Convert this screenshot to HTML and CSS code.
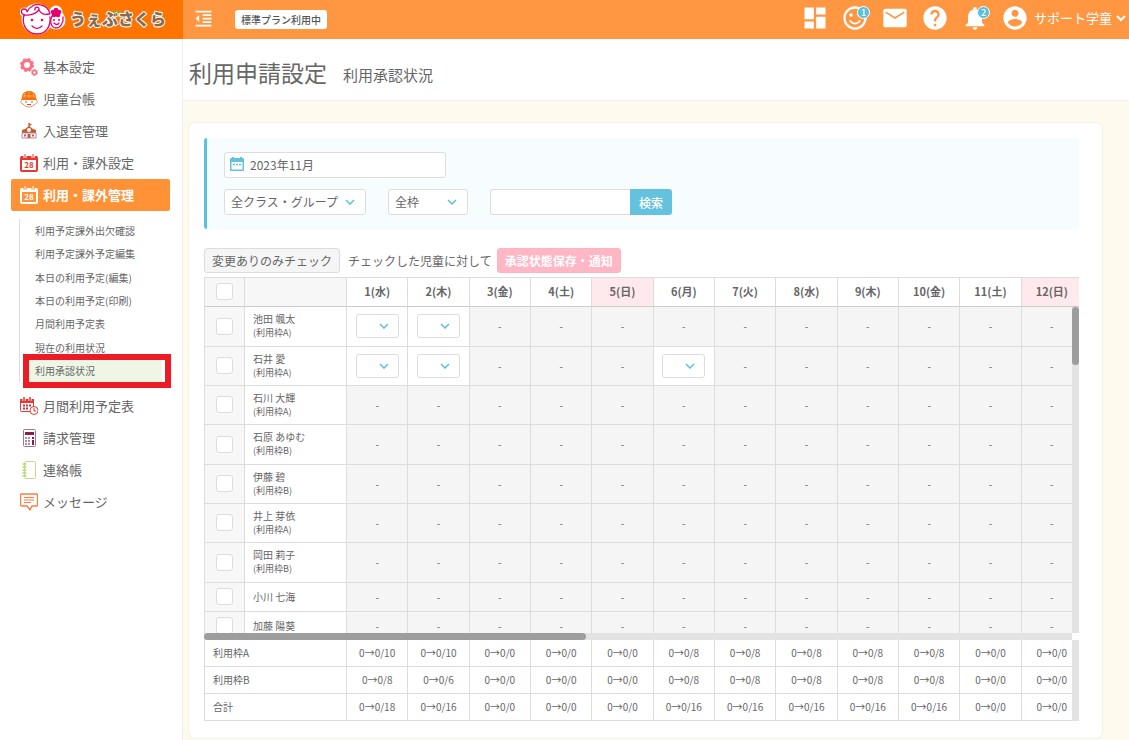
FILE: index.html
```html
<!DOCTYPE html>
<html lang="ja">
<head>
<meta charset="utf-8">
<title>利用承認状況</title>
<link rel="stylesheet" href="styles.css">
</head>
<body>
<header class="topbar">
  <a class="brand" href="#" aria-label="うぇぶさくら">
    <svg class="brand-logo" viewBox="0 0 148 36">
      <g fill="#fff" stroke="#fff" stroke-width="3">
        <circle cx="17" cy="18" r="14"/><circle cx="36" cy="19" r="8"/><circle cx="4" cy="11" r="3"/><circle cx="36" cy="11" r="5"/>
      </g>
      <g fill="none" stroke="#e4006d" stroke-width="1.3" stroke-linecap="round">
        <path d="M4 14C1 13 0 8 4 8c2 0 3 1 3 3C10 5 16 2 21 4c5 1 8 4 9 9"/>
        <path d="M4 14c-3 11 4 19 13 19s14-8 13-17"/>
        <path d="M4 14c6 1 14-2 15-6c0-3-5-2-4 1M19 9c2 4 6 5 10 4"/>
        <path d="M12 25c3 3 7 3 10 0"/>
        <path d="M32 15c-3 7 0 12 4 12s8-5 7-11"/>
        <path d="M34 22c2 2 4 2 5 0"/>
      </g>
      <g fill="#e4006d">
        <circle cx="12" cy="19" r="1.3"/><circle cx="22" cy="19" r="1.3"/><circle cx="34" cy="19" r="1"/><circle cx="39" cy="19" r="1"/>
        <circle cx="36" cy="9" r="2.3"/><circle cx="33" cy="11" r="2.3"/><circle cx="39" cy="11" r="2.3"/><circle cx="34" cy="14" r="2.3"/><circle cx="38" cy="14" r="2.3"/><circle cx="36" cy="12" r="2"/>
      </g>
      <text class="brand-text" x="50" y="24">うぇぶさくら</text>
      <path d="M94 10l1.500 3M97 9l1.500 3" stroke="#6cc04a" stroke-width="1.500"/>
    </svg>
  </a>
  <button class="icon-btn menu-toggle" aria-label="メニュー"><svg viewBox="0 0 24 24"><path d="M11 17h10v-2H11v2zm-8-5l4 4V8l-4 4zm0 9h18v-2H3v2zM3 3v2h18V3H3zm8 6h10V7H11v2zm0 4h10v-2H11v2z"/></svg></button>
  <span class="plan">標準プラン利用中</span>
  <nav class="tools">
    <button class="icon-btn" aria-label="ダッシュボード"><svg viewBox="0 0 24 24"><path d="M3 13h8V3H3v10zm0 8h8v-6H3v6zm10 0h8V11h-8v10zm0-18v6h8V3h-8z"/></svg></button>
    <button class="icon-btn" aria-label="出席"><svg viewBox="0 0 24 24"><path d="M11.990 2C6.470 2 2 6.480 2 12s4.470 10 9.990 10C17.520 22 22 17.520 22 12S17.520 2 11.990 2zM12 20c-4.420 0-8-3.580-8-8s3.580-8 8-8 8 3.580 8 8-3.580 8-8 8z"/><circle cx="15.500" cy="9.500" r="1.500"/><circle cx="8.500" cy="9.500" r="1.500"/><path d="M12 16c-1.480 0-2.750-.81-3.450-2H6.880c.8 2.050 2.790 3.500 5.120 3.500s4.320-1.450 5.120-3.500h-1.670c-.7 1.190-1.970 2-3.450 2z"/></svg><span class="count">1</span></button>
    <button class="icon-btn" aria-label="メール"><svg viewBox="0 0 24 24"><rect x="2" y="4" width="20" height="16" rx="1.500"/><path d="M4 7l8 5 8-5" fill="none" stroke="#ff9742" stroke-width="1.400"/></svg></button>
    <button class="icon-btn" aria-label="ヘルプ"><svg viewBox="0 0 24 24"><path d="M12 2C6.480 2 2 6.480 2 12s4.480 10 10 10 10-4.480 10-10S17.520 2 12 2zm1 17h-2v-2h2v2zm2.070-7.750l-.9.920C13.450 12.900 13 13.500 13 15h-2v-.5c0-1.100.45-2.100 1.170-2.830l1.240-1.260c.37-.36.590-.86.590-1.410 0-1.100-.9-2-2-2s-2 .9-2 2H8c0-2.210 1.790-4 4-4s4 1.790 4 4c0 .88-.36 1.680-.93 2.250z"/></svg></button>
    <button class="icon-btn" aria-label="お知らせ"><svg viewBox="0 0 24 24"><path d="M12 22c1.100 0 2-.9 2-2h-4c0 1.100.89 2 2 2zm6-6v-5c0-3.070-1.640-5.640-4.500-6.320V4c0-.83-.67-1.500-1.500-1.500s-1.500.67-1.500 1.500v.68C7.630 5.360 6 7.920 6 11v5l-2 2v1h16v-1l-2-2z"/></svg><span class="count">2</span></button>
    <button class="account"><svg viewBox="0 0 24 24"><path d="M12 2C6.480 2 2 6.480 2 12s4.480 10 10 10 10-4.480 10-10S17.520 2 12 2zm0 3c1.660 0 3 1.340 3 3s-1.340 3-3 3-3-1.340-3-3 1.340-3 3-3zm0 14.200c-2.500 0-4.710-1.280-6-3.220.03-1.990 4-3.080 6-3.080 1.990 0 5.970 1.090 6 3.080-1.290 1.940-3.500 3.220-6 3.220z"/></svg><span>サポート学童</span><svg class="caret" viewBox="0 0 10 10"><path d="M1 3l4 4 4-4"/></svg></button>
  </nav>
</header>
<div class="shell">
  <aside class="sidebar">
    <ul class="menu">
      <li><a href="#"><svg viewBox="0 0 18 18"><circle cx="7" cy="7" r="4.500" fill="none" stroke="#ff7085" stroke-width="3"/><circle cx="7" cy="7" r="6" fill="none" stroke="#ff7085" stroke-width="2" stroke-dasharray="2.700 2"/><circle cx="14.500" cy="14.500" r="2" fill="none" stroke="#ff7085" stroke-width="1.500"/><circle cx="14.500" cy="14.500" r="3" fill="none" stroke="#ff7085" stroke-dasharray="1.300 1"/></svg><span>基本設定</span></a></li>
      <li><a href="#"><svg viewBox="0 0 18 18"><path d="M2 8C2 3 5 1 9 1s7 2 7 7l1 2H1z" fill="#f96f08"/><path d="M9 1v7M5 3L4 8M13 3l1 5M3 6h12" stroke="#ffb06b" stroke-width=".8" fill="none"/><path d="M2 10c-3 2 0 4 1 4 3 4 9 4 12 0 1 0 4-2 1-4" fill="#fff" stroke="#f0935a"/><path d="M5 12h2M11 12h2M7 14.500h4" stroke="#d9482b"/></svg><span>児童台帳</span></a></li>
      <li><a href="#"><svg viewBox="0 0 18 18"><path d="M9 1v4" stroke="#7c3a36"/><path d="M9 1l3 1.500L9 4z" fill="#e8501f"/><path d="M5 7l4-3 4 3 3 1v3H2V8z" fill="#c75a28"/><path d="M2 11h14v5H2z" fill="#fff" stroke="#b9878b"/><circle cx="9" cy="8" r="2" fill="#fff"/><path d="M7.500 16v-4h3v4zM4 12.500h2v2H4zM12 12.500h2v2h-2z" fill="#bd5963"/></svg><span>入退室管理</span></a></li>
      <li><a href="#"><svg viewBox="0 0 18 18"><rect x="1" y="3" width="16" height="14" rx="1" fill="#fff" stroke="#e8392e" stroke-width="2"/><path d="M1 2h16v4H1z" fill="#e8392e"/><path d="M5 0v4M13 0v4" stroke="#fff" stroke-width="3"/><path d="M5 0v4M13 0v4" stroke="#e8392e"/><text x="9" y="14" class="cal-num" fill="#e8392e">28</text></svg><span>利用・課外設定</span></a></li>
      <li class="is-open"><a href="#"><svg viewBox="0 0 18 18"><rect x="1" y="3" width="16" height="14" rx="1" fill="none" stroke="#fff" stroke-width="2"/><path d="M1 2h16v4H1z" fill="#fff"/><path d="M5 0v4M13 0v4" stroke="#ff9137" stroke-width="3"/><path d="M5 0v4M13 0v4" stroke="#fff"/><text x="9" y="14" class="cal-num" fill="#fff">28</text></svg><span>利用・課外管理</span></a>
        <ul class="submenu">
          <li><a href="#">利用予定課外出欠確認</a></li>
          <li><a href="#">利用予定課外予定編集</a></li>
          <li><a href="#">本日の利用予定(編集)</a></li>
          <li><a href="#">本日の利用予定(印刷)</a></li>
          <li><a href="#">月間利用予定表</a></li>
          <li><a href="#">現在の利用状況</a></li>
          <li class="is-current"><a href="#">利用承認状況</a></li>
        </ul>
      </li>
      <li><a href="#"><svg viewBox="0 0 18 18"><rect x=".5" y="2.500" width="13" height="12" rx="1" fill="#fff" stroke="#e8392e"/><path d="M0 2h14v4H0z" fill="#e8392e"/><path d="M4 0v4M10 0v4" stroke="#fff" stroke-width="3"/><path d="M4 0v4M10 0v4" stroke="#e8392e" stroke-width="1.500"/><path d="M3 8.500h9M3 11.500h6" stroke="#c8304a" stroke-width="2" stroke-dasharray="2 1"/><circle cx="14" cy="13.500" r="4" fill="#fff" stroke="#e8392e"/><path d="M14 11v3h2" fill="none" stroke="#e8392e"/></svg><span>月間利用予定表</span></a></li>
      <li><a href="#"><svg viewBox="0 0 18 18"><rect x="3.500" y=".5" width="12" height="17" rx="1" fill="#fff" stroke="#a0788c"/><path d="M5 3h9v3H5z" fill="#8c1f49"/><path d="M5 9h6M5 12h6M5 15h6" stroke="#a86080" stroke-width="1.600" stroke-dasharray="2 1"/><path d="M12 8h2v2h-2zM12 11h2v5h-2z" fill="#8c1f49"/></svg><span>請求管理</span></a></li>
      <li><a href="#"><svg viewBox="0 0 18 18"><rect x="4.500" y=".5" width="11" height="17" rx="1" fill="#fff" stroke="#c5d88a"/><path d="M2.500 3h4M2.500 6h4M2.500 9h4M2.500 12h4M2.500 15h4" stroke="#b9d977" stroke-width="1.400"/></svg><span>連絡帳</span></a></li>
      <li><a href="#"><svg viewBox="0 0 18 18"><path d="M2 1h14q1.500 0 1.500 1v10q0 1-1.500 1h-4l-2 4-3-4H2q-1.500 0-1.500-1V2q0-1 1.500-1z" fill="#fff" stroke="#ff7a3c" stroke-width="1.300"/><path d="M4 4.500h10M4 7h10M4 9.500h7" stroke="#ff7a3c"/></svg><span>メッセージ</span></a></li>
    </ul>
  </aside>
  <main class="main">
    <div class="page-head"><h1>利用申請設定</h1><h2>利用承認状況</h2></div>
    <section class="card">
      <form class="filters">
        <label class="date-field">
          <svg viewBox="0 0 14 14"><path d="M1 1h12q1 0 1 1v11q0 1-1 1H1q-1 0-1-1V2q0-1 1-1z" fill="#64c2de"/><path d="M1.500 5h11v7.500h-11z" fill="#fff"/><path d="M3 0v2M11 0v2" stroke="#64c2de" stroke-width="2"/><path d="M3 7.500h2M6 7.500h2M9 7.500h2" stroke="#64c2de" stroke-width="1.500"/></svg>
          <input class="field" type="text" value="2023年11月" aria-label="対象年月">
        </label>
        <div class="filter-row">
          <select class="field class-select" aria-label="クラス・グループ"><option>全クラス・グループ</option></select>
          <select class="field frame-select" aria-label="枠"><option>全枠</option></select>
          <div class="search"><input class="field" type="text" aria-label="児童名"><button type="button">検索</button></div>
        </div>
      </form>
      <div class="actions">
        <button class="btn btn-plain">変更ありのみチェック</button>
        <span>チェックした児童に対して</span>
        <button class="btn btn-pink">承認状態保存・通知</button>
      </div>
      <div class="grid">
        <div class="clip head"><table class="sheet"><thead id="days"></thead></table></div>
        <div class="clip body"><table class="sheet"><tbody id="children"></tbody></table></div>
        <div class="track track-y"><div class="thumb"></div></div>
        <div class="track track-x"><div class="thumb"></div></div>
        <div class="clip foot"><table class="sheet"><tbody id="totals"></tbody></table></div>
        <div class="track track-foot"></div>
      </div>
    </section>
  </main>
</div>
<script src="app.js"></script>
</body>
</html>
```
FILE: styles.css
```css
* { box-sizing: border-box; }
body {
  margin: 0;
  min-height: 100vh;
  display: flex;
  flex-direction: column;
  font-family: "Noto Sans CJK JP", "Noto Sans", sans-serif;
  font-size: 12px;
  color: #666;
  background: #fffaee;
}
button, input, select { font: inherit; color: inherit; margin: 0; }
button { border: 0; padding: 0; background: none; }
a { color: inherit; text-decoration: none; }
ul { list-style: none; margin: 0; padding: 0; }

.topbar { display: flex; align-items: center; height: 39px; background: #ff9742; color: #fff; }
.brand { width: 183px; height: 39px; padding: 1px 0 0 20px; background: #ff7300; }
.brand-logo { display: block; width: 148px; height: 36px; }
.brand-text { font-size: 16px; font-weight: 900; fill: #8a6a4f; stroke: #fff; stroke-width: 2px; stroke-linejoin: round; paint-order: stroke; }
.icon-btn { position: relative; width: 28px; height: 28px; }
.icon-btn svg, .account svg { display: block; width: 28px; height: 28px; fill: #fff; }
.menu-toggle { width: 21px; height: 21px; margin: 0 0 2px 10px; }
.menu-toggle svg { width: 21px; height: 21px; }
.plan { margin-left: 21px; padding: 0 6px; height: 19px; line-height: 19px; border-radius: 3px; background: #fff; color: #555; font-size: 10px; font-weight: 500; }
.tools { display: flex; align-items: center; gap: 12px; margin-left: auto; padding: 0 3px 3px 0; }
.count { position: absolute; top: 2px; left: 16px; width: 13px; height: 13px; border: 1px solid #fff; border-radius: 50%; background: #5bc0de; color: #fff; font-size: 9px; font-weight: 500; line-height: 11px; text-align: center; }
.account { display: flex; align-items: center; gap: 5px; font-size: 13px; line-height: 28px; }
.account .caret { width: 10px; height: 10px; margin-left: -1px; fill: none; stroke: #fff; stroke-width: 2; }

.shell { display: flex; flex: 1; }
.sidebar { width: 183px; flex: none; padding: 12px 12px 0 11px; background: #fff; border-right: 1px solid #eee; }
.menu > li > a { display: flex; align-items: center; gap: 5px; height: 32px; padding-left: 9px; font-size: 13px; border-radius: 2px; }
.menu > li > a svg { width: 18px; height: 18px; flex: none; }
.menu > li > a span { padding-bottom: 2px; }
.menu > .is-open > a { background: #ff9137; color: #fff; font-weight: 700; }
.cal-num { font-size: 8px; font-weight: 700; text-anchor: middle; }
.submenu { display: grid; grid-template-rows: repeat(7, 1fr); height: 163px; margin: 8px 0 8px 8px; border-left: 1px solid #ddd; }
.submenu li { position: relative; margin: 0 8px 0 9px; }
.submenu a { display: flex; align-items: center; height: 100%; padding-left: 6px; font-size: 10px; }
.is-current { background: #eff6e6; }
.is-current::after { content: ""; position: absolute; inset: -5px -9px -6px -6px; border: 6px solid #ed1c24; }

.main { flex: 1; min-width: 0; display: flex; flex-direction: column; }
.page-head { display: flex; align-items: center; gap: 16px; height: 62px; padding: 5px 0 0 6px; background: #fff; border-bottom: 1px solid #eee; }
.page-head h1, .page-head h2 { margin: 0; font-weight: 400; line-height: 34px; }
.page-head h1 { font-size: 23px; }
.page-head h2 { font-size: 15px; padding-top: 6px; }
.card { margin: 22px 27px 2px 6px; padding: 15px 23px 17px 15px; background: #fff; border-radius: 6px; box-shadow: 0 0 2px #ddd; }

.filters { display: grid; gap: 11px; padding: 14px 17px; border-left: 3px solid #5bc0de; border-radius: 3px; background: #f7fdfe; }
.field { height: 26px; border: 1px solid #ddd; border-radius: 3px; background-color: #fff; padding: 0 6px 1px; }
.date-field { position: relative; width: 222px; }
.date-field svg { position: absolute; left: 6px; top: 5px; width: 14px; height: 14px; }
.date-field .field { display: block; width: 100%; padding-left: 25px; }
.filter-row { display: flex; gap: 22px; }
select {
  appearance: none;
  background-image: url("data:image/svg+xml,%3Csvg xmlns='http://www.w3.org/2000/svg' viewBox='0 0 10 6'%3E%3Cpath d='M1 1l4 4 4-4' fill='none' stroke='%235bc0de' stroke-width='1.500'/%3E%3C/svg%3E");
  background-repeat: no-repeat;
  background-position: right 10px center;
  background-size: 10px 6px;
}
.class-select { width: 142px; }
.frame-select { width: 80px; }
.search { display: flex; }
.search .field { width: 140px; border-right: 0; border-radius: 3px 0 0 3px; }
.search button { width: 42px; border-radius: 0 3px 3px 0; background: #64c2de; color: #fff; font-weight: 500; }

.actions { display: flex; align-items: center; gap: 5px; margin: 19px 0 4px; }
.actions span { padding: 0 0 1px 3px; }
.btn { height: 25px; padding: 0 7px 1px; border: 1px solid #ddd; border-radius: 3px; white-space: nowrap; }
.btn-plain { background: #f5f5f5; }
.btn-pink { border-color: #ffb3c1; background: #ffb6c5; color: #fff; font-weight: 700; }

.grid { display: grid; grid-template-columns: minmax(0, 1fr) 7px; }
.clip { overflow: hidden; }
.head { grid-column: 1 / 3; border-top: 1px solid #ddd; }
.body { height: 326px; }
.sheet { width: 879px; table-layout: fixed; border-collapse: separate; border-spacing: 0; border-left: 1px solid #ddd; line-height: 14px; font-size: 10px; }
.sheet th, .sheet td { padding: 0 0 1px; border-right: 1px solid #ddd; border-bottom: 1px solid #ddd; text-align: center; }
.sheet .check { width: 40px; background: #f7f7f7; }
.sheet .name { width: 102px; padding-left: 8px; text-align: left; font-weight: 400; }
.sheet thead th { height: 29px; padding-bottom: 2px; font-size: 11px; border-bottom-color: #ccc; }
.head .name { background: #f7f7f7; }
.head .holiday { background: #ffe9ec; }
.body tr { height: 39px; }
.body tr:nth-child(3n+1) { height: 40px; }
.body tr.short { height: 29px; }
.body td.off { background: #f5f5f5; }
.name small { display: block; font-size: 9px; }
.check input { appearance: none; display: block; width: 17px; height: 17px; margin: 0 auto; border: 1px solid #ddd; border-radius: 3px; background: #fff; }
.body td select { display: block; width: 43px; height: 24px; margin: 0 auto; border: 1px solid #ddd; border-radius: 3px; background-color: #fff; background-position: right 9px center; }
.foot tr { height: 27px; }
.sheet .label { width: 142px; padding-left: 8px; text-align: left; font-weight: 400; }
.track { background: #e3e3e3; }
.thumb { background: #9d9d9d; border-radius: 4px; }
.track-y .thumb { height: 58px; }
.track-x { grid-column: 1; height: 7px; }
.track-x .thumb { width: 44%; height: 7px; }
.foot { grid-column: 1; }
```
FILE: app.js
```js
const weekdays = ['水', '木', '金', '土', '日', '月', '火'];
const days = Array.from({ length: 12 }, (_, i) => ({ n: i + 1, w: weekdays[(i) % 7] }));

const children = [
  { name: '池田 颯太', frame: 'A', requests: [1, 2] },
  { name: '石井 愛', frame: 'A', requests: [1, 2, 6] },
  { name: '石川 大輝', frame: 'A', requests: [] },
  { name: '石原 あゆむ', frame: 'B', requests: [] },
  { name: '伊藤 碧', frame: 'B', requests: [] },
  { name: '井上 芽依', frame: 'A', requests: [] },
  { name: '岡田 莉子', frame: 'B', requests: [] },
  { name: '小川 七海', frame: '', requests: [] },
  { name: '加藤 陽葵', frame: '', requests: [] }
];

const totals = [
  { label: '利用枠A', caps: [10, 10, 0, 0, 0, 8, 8, 8, 8, 8, 0, 0] },
  { label: '利用枠B', caps: [8, 6, 0, 0, 0, 8, 8, 8, 8, 8, 0, 0] },
  { label: '合計', caps: [18, 16, 0, 0, 0, 16, 16, 16, 16, 16, 0, 0] }
];

const check = (label) => `<input type="checkbox" aria-label="${label}">`;

document.getElementById('days').innerHTML =
  `<tr><th class="check">${check('すべて選択')}</th><th class="name"></th>` +
  days.map((d) => `<th class="${d.w === '日' ? 'holiday' : ''}">${d.n}(${d.w})</th>`).join('') + '</tr>';

document.getElementById('children').innerHTML = children.map((c) =>
  `<tr class="${c.frame ? '' : 'short'}"><td class="check">${check(c.name)}</td>` +
  `<th class="name">${c.name}${c.frame ? `<small>(利用枠${c.frame})</small>` : ''}</th>` +
  days.map((d) => c.requests.includes(d.n)
    ? `<td><select aria-label="${c.name} ${d.n}日"><option></option></select></td>`
    : '<td class="off">-</td>').join('') + '</tr>').join('');

document.getElementById('totals').innerHTML = totals.map((t) =>
  `<tr><th class="label">${t.label}</th>` +
  t.caps.map((n) => `<td>0→0/${n}</td>`).join('') + '</tr>').join('');
```
